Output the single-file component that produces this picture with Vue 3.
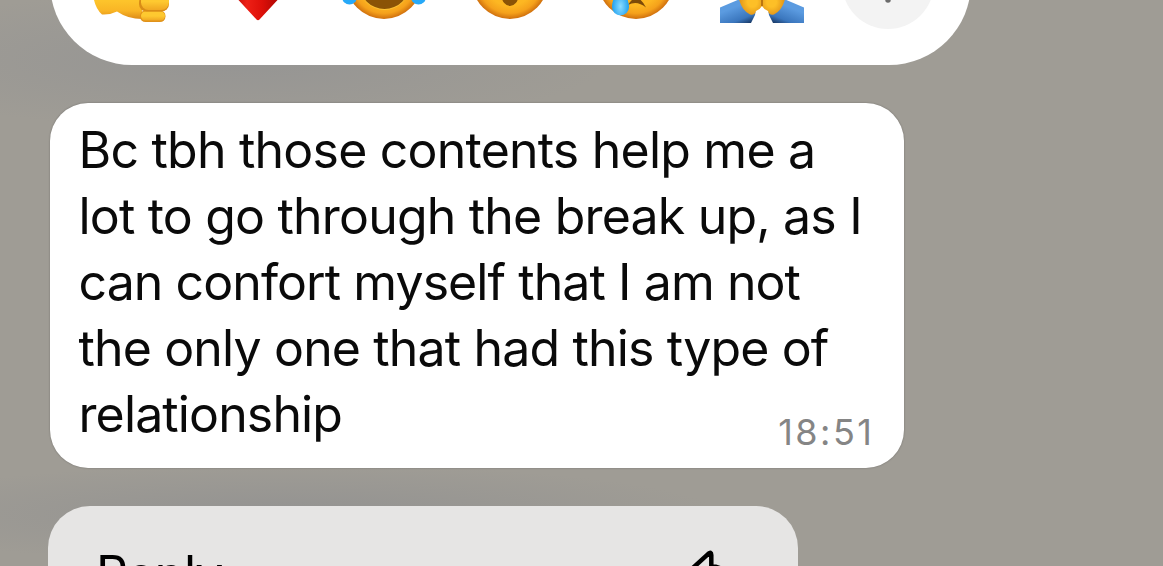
<template>
  <div class="screen">
    <div class="reactions">
      <svg class="emoji" viewBox="0 0 84 84">
        <defs>
          <linearGradient id="hand" x1="0" y1="0" x2="0" y2="1">
            <stop offset="0.55" stop-color="#fdc42b" />
            <stop offset="0.8" stop-color="#f9b525" />
            <stop offset="1" stop-color="#dc8a18" />
          </linearGradient>
          <linearGradient id="finger" x1="0" y1="0" x2="0" y2="1">
            <stop offset="0.5" stop-color="#fec930" />
            <stop offset="1" stop-color="#f0a722" />
          </linearGradient>
        </defs>
        <path d="M2 40 L4 61 Q6 70 12 75.500 Q20 76 27 72.500 Q38 80 52 80 L54 40 Z" fill="url(#hand)" />
        <rect x="50" y="71.500" width="25.500" height="11.500" rx="5.500" fill="#e0921a" />
        <rect x="51" y="72.500" width="24" height="9" rx="4.500" fill="url(#finger)" />
        <rect x="49" y="56" width="30" height="16.500" rx="7.500" fill="#d98c16" />
        <rect x="51" y="54" width="28" height="17" rx="7.500" fill="url(#finger)" />
      </svg>
      <svg class="emoji" viewBox="0 0 84 84">
        <defs>
          <linearGradient id="heart" x1="0" y1="0" x2="1" y2="0">
            <stop offset="0.25" stop-color="#c8100a" />
            <stop offset="0.36" stop-color="#ee2016" />
            <stop offset="0.55" stop-color="#dd1009" />
            <stop offset="0.75" stop-color="#b00703" />
          </linearGradient>
        </defs>
        <path d="M2 30 Q6 46 22 60.500 L40.500 80.500 Q42 82 43.500 80.500 L62 60.500 Q78 46 82 30 Z" fill="url(#heart)" />
      </svg>
      <svg class="emoji" viewBox="0 0 84 84">
        <defs>
          <radialGradient id="face">
            <stop offset="0.65" stop-color="#fdb722" />
            <stop offset="0.85" stop-color="#f5a11b" />
            <stop offset="1" stop-color="#cf6f0d" />
          </radialGradient>
        </defs>
        <circle cx="42" cy="42" r="38" fill="url(#face)" />
        <ellipse cx="42.500" cy="46" rx="25" ry="25" fill="#fbc234" />
        <ellipse cx="42.500" cy="45" rx="25" ry="25" fill="#8a5306" />
        <circle cx="7.500" cy="58" r="7.500" fill="#27a9f8" />
        <circle cx="76.500" cy="58" r="7.500" fill="#27a9f8" />
      </svg>
      <svg class="emoji" viewBox="0 0 84 84">
        <circle cx="42" cy="42" r="38" fill="url(#face)" />
        <ellipse cx="42" cy="56" rx="8.500" ry="11" fill="#8a5306" />
      </svg>
      <svg class="emoji" viewBox="0 0 84 84">
        <defs>
          <radialGradient id="tear" cy="0.7">
            <stop offset="0" stop-color="#8bdcff" />
            <stop offset="1" stop-color="#1ea0f0" />
          </radialGradient>
        </defs>
        <circle cx="42" cy="42" r="38" fill="url(#face)" />
        <path d="M34 66 Q43 51 52 68.500 Q43 61 34 66 Z" fill="#7d4a08" />
        <path d="M26 46 Q35 60 35 68 A8.500 8.500 0 0 1 18 68 Q18 60 26 46 Z" fill="url(#tear)" />
      </svg>
      <svg class="emoji" viewBox="0 0 84 84">
        <defs>
          <linearGradient id="sleeve" x1="0.3" y1="0" x2="0.9" y2="1">
            <stop offset="0.3" stop-color="#5b9be0" />
            <stop offset="0.75" stop-color="#3a76bd" />
            <stop offset="1" stop-color="#16345f" />
          </linearGradient>
          <radialGradient id="palm" cx="0.6" cy="0.5">
            <stop offset="0.4" stop-color="#fdbf27" />
            <stop offset="1" stop-color="#e59a1a" />
          </radialGradient>
        </defs>
        <g v-for="side in sides" :key="side" :transform="side">
          <path d="M0 68.500 L20 60 L35.500 73 L35 76 L31 84 H0 Z" fill="url(#sleeve)" />
          <path d="M18.500 58 Q21 71 30 75.500 Q35 76.500 36 72 Q40 70.500 42 67 V50 H18 Z" fill="url(#palm)" />
        </g>
        <path d="M42 54 V67" stroke="#a9640c" stroke-width="1.500" />
      </svg>
      <div class="more">
        <svg viewBox="0 0 92 92">
          <path d="M46 23 V63 M26 43 H66" />
        </svg>
      </div>
    </div>

    <div class="bubble">
      <p class="message">
        <span v-for="(line, i) in lines" :key="i" class="line">{{ line }}</span>
      </p>
      <time class="time">18:51</time>
    </div>

    <div class="menu">
      <span class="label">Reply</span>
      <svg class="reply" viewBox="0 0 52 44">
        <path d="M24.300 5.800 Q27.300 3.300 27.300 7 V18 Q43 18.500 49 40 Q42 30 27.300 30 V38 Q27.300 42 24 39.500 L5 23.500 Z" />
      </svg>
    </div>
  </div>
</template>

<script setup>
const lines = [
  'Bc tbh those contents help me a',
  'lot to go through the break up, as I',
  'can confort myself that I am not',
  'the only one that had this type of',
  'relationship',
]
// the folded hands are symmetric: left half, then its mirror
const sides = ['matrix(1 0 0 1 0 0)', 'matrix(-1 0 0 1 84 0)']
</script>

<style>
body { margin: 0; overflow: hidden; }
</style>

<style scoped>
.screen {
  box-sizing: border-box;
  width: 1163px;
  height: 566px;
  padding-left: 50px;
  overflow: hidden;
  font-family: Inter, "Liberation Sans", sans-serif;
  color: #0a0a0a;
  background:
    radial-gradient(ellipse 380px 70px at 230px 60px, rgba(147, 147, 147, .8), rgba(155, 154, 150, 0)),
    radial-gradient(ellipse 430px 50px at 290px 514px, rgba(144, 144, 144, .8), rgba(155, 154, 150, 0)),
    #9f9c95;
}

.reactions {
  display: flex;
  align-items: center;
  box-sizing: border-box;
  width: 921px;
  height: 164px;
  margin-top: -99px;
  padding-left: 40px;
  gap: 42px;
  border-radius: 82px;
  background: #fff;
}
.emoji { flex: none; width: 84px; height: 84px; margin-top: -4px; }
.more { width: 92px; height: 92px; margin-left: -4px; border-radius: 50%; background: #f3f3f3; }
.more svg { display: block; fill: none; stroke: #6b6b6b; stroke-width: 5.5; stroke-linecap: round; }

.bubble {
  display: flex;
  justify-content: space-between;
  align-items: flex-end;
  box-sizing: border-box;
  width: 854px;
  height: 365px;
  margin-top: 38px;
  padding: 0 29.5px 21px 28.5px;
  border-radius: 38px;
  background: #fff;
  box-shadow: 0 0 2px rgba(0, 0, 0, .3);
}
.message { margin: 0; width: 600px; font-size: 50px; line-height: 66px; }
.line { display: block; white-space: nowrap; }
.line:nth-child(1) { letter-spacing: -.78px; }
.line:nth-child(2) { letter-spacing: -.81px; }
.line:nth-child(3) { letter-spacing: -.92px; }
.line:nth-child(4) { letter-spacing: -.85px; }
.line:nth-child(5) { letter-spacing: -.87px; }
.time { font-size: 36px; line-height: 30px; letter-spacing: 2.5px; color: #858585; }

.menu {
  display: flex;
  justify-content: space-between;
  box-sizing: border-box;
  width: 750px;
  height: 130px;
  margin: 38px 0 0 -2px;
  padding: 35px 62px 0 48px;
  border-radius: 42px;
  background: #e6e5e4;
  color: #000;
}
.label { font-size: 50px; line-height: 66px; letter-spacing: -1.1px; }
.reply { width: 52px; height: 44px; margin-top: 7px; fill: none; stroke: #000; stroke-width: 4.5; stroke-linejoin: round; }
</style>
